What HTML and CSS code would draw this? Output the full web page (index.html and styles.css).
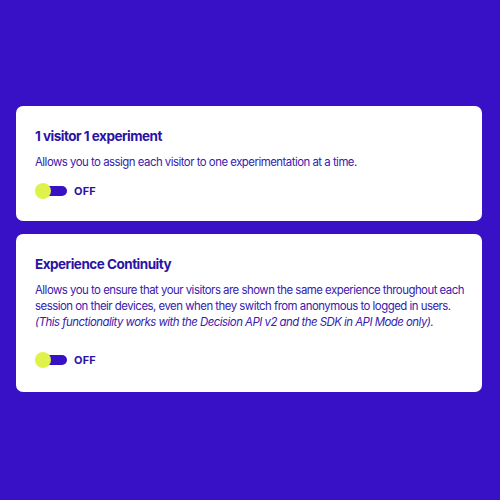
FILE: index.html
```html
<!DOCTYPE html>
<html lang="en">

<head>
    <meta charset="UTF-8">
    <meta name="viewport" content="width=device-width, initial-scale=1.0">
    <title>Experiment settings</title>
    <link rel="stylesheet" href="styles.css">
</head>

<body>
    <div class="settings">
        <div class="card">
            <h2>1 visitor 1 experiment</h2>
            <p class="desc">Allows you to assign each visitor to one experimentation at a time.</p>
            <label class="switch">
                <span class="track"><span class="knob"></span></span>
                <span class="state">OFF</span>
            </label>
        </div>

        <div class="card card-tall">
            <h2>Experience Continuity</h2>
            <p class="desc">
                Allows you to ensure that your visitors are shown the same experience throughout each<br>
                session on their devices, even when they switch from anonymous to logged in users.<br>
                <em>(This functionality works with the Decision API v2 and the SDK in API Mode only).</em>
            </p>
            <label class="switch">
                <span class="track"><span class="knob"></span></span>
                <span class="state">OFF</span>
            </label>
        </div>
    </div>
</body>

</html>
```

FILE: styles.css
```css
body {
    margin: 0;
    height: 100vh;
    background-color: #3810c6;
    font-family: Inter, "Noto Sans", sans-serif;
    color: #2a12a6;
}

.settings {
    display: flex;
    flex-direction: column;
    gap: 13px;
    padding: 106px 18px 0 16px;
}

.card {
    background-color: #ffffff;
    border-radius: 7px;
    padding: 21px 19px 22px;
}

.card-tall {
    padding-bottom: 24px;
}

h2 {
    margin: 0;
    font-size: 13.5px;
    line-height: 18px;
    font-weight: 700;
    letter-spacing: -0.5px;
}

.desc {
    margin: 9px 0 0;
    font-size: 11.4px;
    line-height: 16px;
    letter-spacing: -0.5px;
    color: #3620b0;
    white-space: nowrap;
}

.desc em {
    font-style: italic;
}

.switch {
    display: flex;
    align-items: center;
    gap: 7px;
    margin-top: 13px;
    cursor: pointer;
}

.card-tall .switch {
    margin-top: 22px;
}

.track {
    position: relative;
    width: 32px;
    height: 16px;
}

.track::before {
    content: "";
    position: absolute;
    left: 8px;
    right: 0;
    top: 3px;
    height: 10px;
    border-radius: 5px;
    background-color: #3810c6;
}

.knob {
    position: absolute;
    left: 0;
    top: 0;
    width: 16px;
    height: 16px;
    border-radius: 50%;
    background-color: #def24a;
}

.state {
    font-size: 11px;
    font-weight: 700;
    letter-spacing: 0.2px;
}
```
